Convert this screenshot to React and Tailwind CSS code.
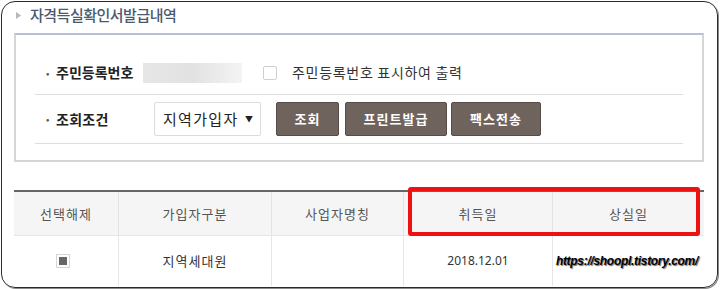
import React from "react";

const font = { fontFamily: '"Noto Sans CJK KR", "Noto Sans", sans-serif' };

function Bullet() {
  return <span className="w-[10px] text-[10px] leading-none text-[#555]">•</span>;
}

export default function App() {
  return (
    <div className="w-[720px] h-[289px] bg-white pt-[1px] pl-[1px]" style={font}>
      <div className="w-[717px] h-[287px] border border-[#2a2a2a] rounded-[14px] overflow-hidden shadow-[1px_1px_0_#8a8a8a] pl-[12px] pr-[13px]">
        {/* title */}
        <div className="h-[31px] flex items-center pl-[2px] pb-[5px]">
          <svg width="5" height="7" viewBox="0 0 5 7" className="mr-[9px]">
            <path d="M0 0 L5 3.5 L0 7 Z" fill="#b8b8b8" />
          </svg>
          <span className="text-[15px] font-medium tracking-[-0.5px] text-[#4a5a6e] leading-[20px]">
            자격득실확인서발급내역
          </span>
        </div>

        {/* search panel */}
        <div className="border-2 border-[#d6d6d6] border-t-[#b3c2d3] px-[19px] pt-[16px] pb-[16px]">
          <div className="h-[44px] flex items-center border-b border-[#dedede] pl-[11px]">
            <Bullet />
            <span className="text-[14px] font-bold text-[#222] tracking-[0px] w-[87px]">주민등록번호</span>
            <div className="w-[99px] h-[20px] bg-gradient-to-r from-[#e6e6e6] via-[#e2e2e2] to-[#f4f4f4]" />
            <div className="ml-[21px] w-[14px] h-[14px] border border-[#cfcfcf] rounded-[2px] bg-white" />
            <span className="ml-[15px] text-[14px] text-[#333] tracking-[0.7px]">주민등록번호 표시하여 출력</span>
          </div>
          <div className="h-[49px] flex items-center border-b border-[#dedede] pl-[11px]">
            <Bullet />
            <span className="text-[14px] font-bold text-[#222] tracking-[0.3px] w-[98px]">조회조건</span>
            <div className="w-[107px] h-[34px] border border-[#dcdcdc] rounded-[2px] flex items-center pl-[8px] pr-[7px] justify-between">
              <span className="text-[15px] text-[#222] tracking-[1.3px]">지역가입자</span>
              <span className="text-[8px] text-[#222]">▼</span>
            </div>
            <button className="ml-[15px] w-[63px] h-[34px] bg-[#6f635d] border border-[#574c47] rounded-[2px] text-white text-[13px] font-bold tracking-[1px]">조회</button>
            <button className="ml-[6px] w-[102px] h-[34px] bg-[#6f635d] border border-[#574c47] rounded-[2px] text-white text-[13px] font-bold tracking-[1px]">프린트발급</button>
            <button className="ml-[4px] w-[90px] h-[34px] bg-[#6f635d] border border-[#574c47] rounded-[2px] text-white text-[13px] font-bold tracking-[1px]">팩스전송</button>
          </div>
        </div>

        {/* table */}
        <div className="relative mt-[28px]">
          <div className="flex h-[46px] border-t-2 border-[#666] bg-[#f5f5f5] border-b border-b-[#e6e6e6] text-[13px] text-[#555] tracking-[1px]">
            <div className="w-[105px] flex items-center justify-center border-r border-[#e3e3e3]">선택해제</div>
            <div className="w-[153px] flex items-center justify-center border-r border-[#e3e3e3]">가입자구분</div>
            <div className="w-[132px] flex items-center justify-center border-r border-[#e3e3e3]">사업자명칭</div>
            <div className="w-[149px] flex items-center justify-center border-r border-[#e3e3e3]">취득일</div>
            <div className="flex-1 flex items-center justify-center">상실일</div>
          </div>
          <div className="flex h-[50px] text-[13px] text-[#333]">
            <div className="w-[105px] flex items-center justify-center border-r border-[#e6e6e6] pr-[7px]">
              <div className="w-[14px] h-[14px] border border-[#d6d6d6] bg-white p-[2px]">
                <div className="w-full h-full bg-[#6b6565]" />
              </div>
            </div>
            <div className="w-[153px] flex items-center justify-center border-r border-[#e6e6e6] tracking-[1px]">지역세대원</div>
            <div className="w-[132px] border-r border-[#e6e6e6]" />
            <div className="w-[149px] flex items-center justify-center border-r border-[#e6e6e6] text-[12px]" style={{ fontFamily: '"Noto Sans", sans-serif' }}>
              2018.12.01
            </div>
            <div className="flex-1" />
          </div>

          {/* red highlight */}
          <div className="absolute left-[394px] top-[-3px] w-[292px] h-[49px] border-4 border-[#ee1111] rounded-[3px]" />
          {/* watermark */}
          <div
            className="absolute right-[6px] top-[63px] text-[12px] font-bold italic text-black tracking-[-0.3px] leading-[16px] [text-shadow:1px_1px_1px_#666]"
            style={{ fontFamily: '"Liberation Sans", Arial, sans-serif' }}
          >
            https://shoopl.tistory.com/
          </div>
        </div>
      </div>
    </div>
  );
}
